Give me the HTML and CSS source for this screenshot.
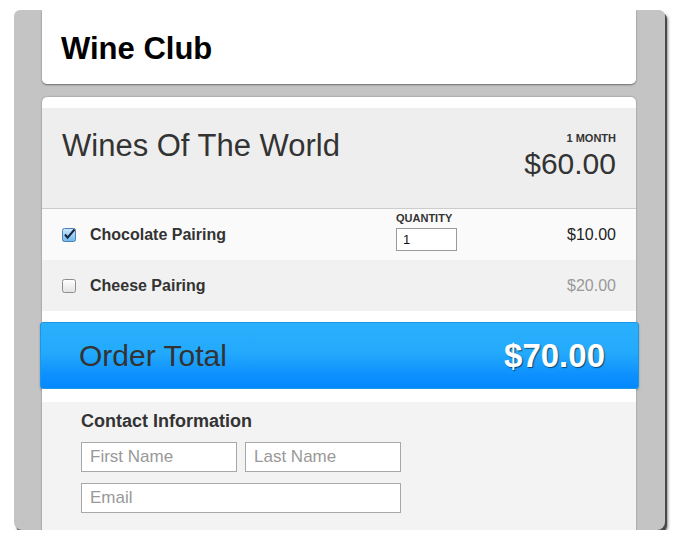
FILE: index.html
```html
<!DOCTYPE html>
<html>
<head>
<meta charset="utf-8">
<link rel="stylesheet" href="styles.css">
</head>
<body>
<div class="frame">
  <div class="header-card">
    <h1 class="brand">Wine Club</h1>
  </div>
  <div class="order-card">
    <div class="plan">
      <div class="plan-title">Wines Of The World</div>
      <div class="plan-price">
        <div class="plan-term">1 MONTH</div>
        <div class="plan-amount">$60.00</div>
      </div>
    </div>
    <div class="addon addon-on">
      <span class="check check-on">
        <svg width="14" height="14" viewBox="0 0 14 14">
          <defs>
            <linearGradient id="cb" x1="0" y1="0" x2="0" y2="1">
              <stop offset="0" stop-color="#cfe8fc"/>
              <stop offset="1" stop-color="#6fb6ef"/>
            </linearGradient>
          </defs>
          <rect x="0.5" y="0.5" width="13" height="13" rx="2" fill="url(#cb)" stroke="#4d7fb3"/>
          <path d="M3 6.5 L5.6 9.6 L12.5 1.5" fill="none" stroke="#15243a" stroke-width="2"/>
        </svg>
      </span>
      <span class="addon-name">Chocolate Pairing</span>
      <div class="qty">
        <div class="qty-label">QUANTITY</div>
        <input class="qty-input" type="text" value="1">
      </div>
      <span class="addon-price">$10.00</span>
    </div>
    <div class="addon addon-off">
      <span class="check">
        <svg width="14" height="14" viewBox="0 0 14 14">
          <defs>
            <linearGradient id="cu" x1="0" y1="0" x2="0" y2="1">
              <stop offset="0" stop-color="#ffffff"/>
              <stop offset="1" stop-color="#e2e2e2"/>
            </linearGradient>
          </defs>
          <rect x="0.5" y="0.5" width="13" height="13" rx="2" fill="url(#cu)" stroke="#8e8e8e"/>
        </svg>
      </span>
      <span class="addon-name">Cheese Pairing</span>
      <span class="qty-empty"></span>
      <span class="addon-price muted">$20.00</span>
    </div>
    <div class="spacer-top"></div>
    <div class="total-bar">
      <span class="total-label">Order Total</span>
      <span class="total-amount">$70.00</span>
    </div>
    <div class="spacer-bottom"></div>
    <div class="contact">
      <div class="contact-title">Contact Information</div>
      <div class="contact-fields">
        <input class="field" type="text" placeholder="First Name">
        <input class="field" type="text" placeholder="Last Name">
        <input class="field field-wide" type="text" placeholder="Email">
      </div>
    </div>
  </div>
</div>
</body>
</html>
```

FILE: styles.css
```css
html, body {
  margin: 0;
  padding: 0;
  background: #ffffff;
}

body {
  font-family: "Liberation Sans", Arial, sans-serif;
}

.frame {
  margin: 10px 0 0 14px;
  width: 651px;
  height: 520px;
  box-sizing: border-box;
  padding: 0 29px 0 28px;
  background: #c4c4c4;
  border-radius: 6px 6px 8px 8px;
  box-shadow: 2px 3px 0 #4a4a4a, 3px 4px 3px rgba(0, 0, 0, 0.45);
  overflow: hidden;
}

.header-card {
  height: 74px;
  box-sizing: border-box;
  background: #ffffff;
  border-radius: 0 0 5px 5px;
  box-shadow: 0 1px 2px rgba(0, 0, 0, 0.45);
  padding: 0 19px;
  display: flex;
  align-items: center;
}

.brand {
  margin: 0;
  font-size: 31px;
  line-height: 31px;
  font-weight: bold;
  color: #000000;
  padding-top: 2px;
}

.order-card {
  margin-top: 13px;
  background: #ffffff;
  border-radius: 5px 5px 0 0;
  box-shadow: 0 0 2px rgba(0, 0, 0, 0.4);
  padding-top: 11px;
  height: 600px;
}

.plan {
  height: 101px;
  box-sizing: border-box;
  background: #eeeeee;
  border-bottom: 1px solid #cccccc;
  padding: 22px 20px 0 20px;
  display: flex;
  justify-content: space-between;
  align-items: flex-start;
}

.plan-title {
  font-size: 31px;
  line-height: 31px;
  color: #333333;
}

.plan-price {
  margin-top: 3px;
  text-align: right;
  color: #333333;
}

.plan-term {
  font-size: 11px;
  line-height: 11px;
  font-weight: bold;
  color: #333333;
}

.plan-amount {
  margin-top: 5px;
  font-size: 30px;
  line-height: 30px;
}

.addon {
  display: grid;
  grid-template-columns: 28px 306px 61px 1fr;
  align-items: center;
  padding: 0 20px;
}

.addon-on {
  height: 51px;
  background: #fafafa;
}

.addon-off {
  height: 51px;
  background: #f1f1f1;
}

.check {
  display: block;
  width: 14px;
  height: 14px;
}

.check svg {
  display: block;
}

.addon-name {
  font-size: 16px;
  line-height: 16px;
  font-weight: bold;
  color: #333333;
}

.qty {
  align-self: start;
  margin-top: 4px;
  display: flex;
  flex-direction: column;
  gap: 4px;
}

.qty-label {
  font-size: 11px;
  line-height: 11px;
  font-weight: bold;
  color: #333333;
}

.qty-input {
  width: 61px;
  height: 23px;
  box-sizing: border-box;
  margin: 0;
  border: 1px solid #9a9a9a;
  background: #ffffff;
  padding: 0 6px;
  font-family: "Liberation Sans", Arial, sans-serif;
  font-size: 13px;
  color: #111111;
  outline: none;
}

.addon-price {
  justify-self: end;
  font-size: 16px;
  line-height: 16px;
  color: #222222;
}

.addon-price.muted {
  color: #999999;
}

.spacer-top {
  height: 11px;
  background: #ffffff;
}

.total-bar {
  margin: 0 -3px 0 -2px;
  height: 67px;
  box-sizing: border-box;
  border: 1px solid #1b97e6;
  border-radius: 3px;
  background: linear-gradient(to bottom, #2bb0fd 0%, #24aafc 45%, #0d90fe 80%, #0588ff 100%);
  box-shadow: 0 1px 2px rgba(0, 0, 0, 0.3);
  display: flex;
  justify-content: space-between;
  align-items: center;
  padding: 0 33px 0 38px;
}

.total-label {
  font-size: 30px;
  line-height: 30px;
  color: #333333;
}

.total-amount {
  font-size: 33px;
  line-height: 33px;
  font-weight: bold;
  color: #ffffff;
  text-shadow: 1px 1px 1px rgba(0, 0, 0, 0.55);
}

.spacer-bottom {
  height: 13px;
  background: #ffffff;
}

.contact {
  background: #f3f3f3;
  padding: 10px 39px 0 39px;
  height: 300px;
}

.contact-title {
  font-size: 18px;
  line-height: 18px;
  font-weight: bold;
  color: #333333;
}

.contact-fields {
  margin-top: 12px;
  display: grid;
  grid-template-columns: 156px 156px;
  column-gap: 8px;
  row-gap: 11px;
}

.field {
  height: 30px;
  box-sizing: border-box;
  margin: 0;
  border: 1px solid #a8a8a8;
  background: #ffffff;
  padding: 0 8px;
  font-family: "Liberation Sans", Arial, sans-serif;
  font-size: 17px;
  color: #333333;
  outline: none;
  width: 100%;
}

.field::placeholder {
  color: #999999;
}

.field-wide {
  grid-column: 1 / span 2;
}
```
